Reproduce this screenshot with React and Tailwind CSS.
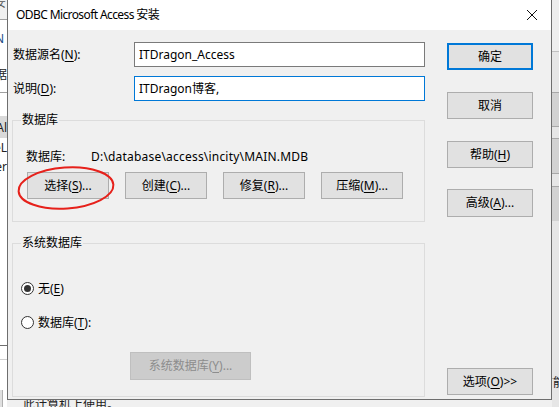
import React from "react";

const FONT = { fontFamily: '"Segoe UI", "Noto Sans", "Noto Sans CJK SC", sans-serif' };

function Btn({ children, className = "", primary = false, disabled = false }) {
  return (
    <div
      className={
        "flex items-center justify-center text-[12px] leading-none " +
        (primary
          ? "border-2 border-[#0078d7] bg-[#e1e1e1] text-black "
          : disabled
          ? "border border-[#bfbfbf] bg-[#cccccc] text-[#8d8d8d] "
          : "border border-[#adadad] bg-[#e1e1e1] text-black ") +
        className
      }
    >
      {children}
    </div>
  );
}

function U({ children }) {
  return <span className="underline underline-offset-2 decoration-1">{children}</span>;
}

function Radio({ checked, children }) {
  return (
    <div className="flex items-center gap-[4px] h-[17px] text-[12px] leading-[17px] text-black">
      <span className="w-[13px] h-[13px] rounded-full border border-[#333333] bg-white flex items-center justify-center">
        {checked && <span className="w-[7px] h-[7px] rounded-full bg-[#333333]" />}
      </span>
      <span>{children}</span>
    </div>
  );
}

function Group({ title, className = "", children }) {
  return (
    <div className={"relative border border-[#dcdcdc] " + className}>
      <span className="absolute left-[8px] top-[-9px] bg-[#f0f0f0] px-[1px] text-[12px] leading-[16px] text-black">
        {title}
      </span>
      {children}
    </div>
  );
}

export default function App() {
  return (
    <div className="relative w-[559px] h-[407px] overflow-hidden bg-[#f0f0f0]" style={FONT}>
      {/* background window fragments (left) */}
      <div className="absolute left-0 top-0 w-[7px] h-[407px] overflow-hidden bg-white">
        <div className="h-[20px] bg-[#f0f0f0] border-b border-[#a0a0a0] relative">
          <span className="absolute right-[1px] top-[-6px] text-[12px] text-[#555]">安</span>
        </div>
        <span className="absolute right-[3px] top-[30px] text-[12px] text-[#1b4b86]">N</span>
        <span className="absolute right-[0px] top-[66px] text-[12px] text-[#222]">据</span>
        <div className="absolute left-0 top-[92px] w-[7px] h-[1px] bg-[#a0a0a0]" />
        <div className="absolute left-0 top-[116px] w-[7px] h-[22px] bg-[#d9d9d9]" />
        <span className="absolute right-[0px] top-[119px] text-[12px] text-[#222]">Al</span>
        <span className="absolute right-[0px] top-[139px] text-[12px] text-[#222]">eL</span>
        <span className="absolute right-[0px] top-[158px] text-[12px] text-[#222]">er</span>
        <div className="absolute left-0 top-[345px] w-[7px] h-[1px] bg-[#6e6e6e]" />
        <div className="absolute left-0 top-[359px] w-[7px] h-[1px] bg-[#d0d0d0]" />
        <div className="absolute left-0 top-[390px] w-[3px] h-[17px] bg-[#e0e0e0] border-r border-[#b0b0b0]" />
      </div>
      {/* background window fragments (right) */}
      <div className="absolute left-[552px] top-0 w-[7px] h-[407px] overflow-hidden bg-[#e6e6e6]">
        <div className="absolute left-0 top-0 w-[7px] h-[52px] bg-[#eeeeee] border-b border-[#c0c0c0]" />
        <div className="absolute left-0 top-[92px] w-[7px] h-[35px] bg-[#d2d2d2] border-y border-[#a8a8a8]" />
        <div className="absolute left-0 top-[138px] w-[7px] h-[36px] bg-[#d2d2d2] border-y border-[#a8a8a8]" />
        <div className="absolute left-0 top-[186px] w-[7px] h-[35px] bg-[#d2d2d2] border-t border-[#a8a8a8]" />
        <div className="absolute left-0 top-[378px] w-[7px] h-[1px] bg-[#b0b0b0]" />
        <span className="absolute left-[1px] top-[374px] text-[12px] text-[#222]">能</span>
      </div>
      {/* bottom strip text */}
      <div className="absolute left-[23px] top-[397px] text-[12px] leading-[16px] text-[#222]">此计算机上使用。</div>

      {/* dialog window */}
      <div className="absolute left-[7px] top-0 w-[545px] h-[400px] border-x border-b border-[#6e6e6e] flex flex-col">
        <div className="h-[30px] bg-white flex items-center justify-between pl-[8px] pr-[10px]">
          <span className="text-[12px] tracking-[-0.6px] text-black">ODBC Microsoft Access 安装</span>
          <svg width="12" height="12" viewBox="0 0 12 12" className="mr-[3px]">
            <path d="M1 1 L11 11 M11 1 L1 11" stroke="#111" strokeWidth="1" />
          </svg>
        </div>
        <div className="flex-1 bg-[#f0f0f0] flex pl-[4px]">
          {/* left column */}
          <div className="w-[414px] flex flex-col pt-[12px]">
            <div className="flex items-center h-[25px]">
              <span className="w-[122px] pl-[1px] text-[12px] text-black">
                数据源名(<U>N</U>):
              </span>
              <div className="w-[291px] h-[25px] bg-white border border-[#7a7a7a] flex items-center pl-[4px] text-[12px] text-black">
                ITDragon_Access
              </div>
            </div>
            <div className="flex items-center h-[25px] mt-[9px]">
              <span className="w-[122px] pl-[1px] text-[12px] text-black">
                说明(<U>D</U>):
              </span>
              <div className="w-[291px] h-[25px] bg-white border border-[#0078d7] flex items-center pl-[4px] text-[12px] text-black">
                ITDragon博客,
              </div>
            </div>

            <Group title="数据库" className="mt-[19px] w-[413px] h-[102px]">
              <div className="flex items-center mt-[27px] pl-[13px] text-[12px] text-black">
                <span className="w-[65px]">数据库:</span>
                <span className="tracking-[0.2px]">D:\database\access\incity\MAIN.MDB</span>
              </div>
              <div className="relative flex gap-[16px] mt-[6px] pl-[14px]">
                <Btn className="w-[82px] h-[27px]">选择(<U>S</U>)...</Btn>
                <Btn className="w-[82px] h-[27px]">创建(<U>C</U>)...</Btn>
                <Btn className="w-[82px] h-[27px]">修复(<U>R</U>)...</Btn>
                <Btn className="w-[82px] h-[27px]">压缩(<U>M</U>)...</Btn>
                <svg
                  className="absolute left-[-4px] top-[-17px] pointer-events-none"
                  width="110"
                  height="60"
                  viewBox="0 0 110 60"
                >
                  <ellipse
                    cx="57"
                    cy="33"
                    rx="47.5"
                    ry="20.5"
                    transform="rotate(-4 57 33)"
                    fill="none"
                    stroke="#e6211b"
                    strokeWidth="2"
                  />
                </svg>
              </div>
            </Group>

            <Group title="系统数据库" className="mt-[21px] w-[413px] h-[154px]">
              <div className="flex flex-col pl-[8px] pt-[36px] gap-[17px]">
                <Radio checked>
                  无(<U>E</U>)
                </Radio>
                <Radio>
                  数据库(<U>T</U>):
                </Radio>
              </div>
              <div className="pl-[117px] mt-[21px]">
                <Btn disabled className="w-[121px] h-[28px]">
                  系统数据库(<U>Y</U>)...
                </Btn>
              </div>
            </Group>
          </div>

          {/* right column */}
          <div className="ml-[21px] flex flex-col pt-[13px] w-[86px]">
            <Btn primary className="w-[86px] h-[27px]">确定</Btn>
            <Btn className="w-[86px] h-[27px] mt-[22px]">取消</Btn>
            <Btn className="w-[86px] h-[27px] mt-[22px]">
              帮助(<U>H</U>)
            </Btn>
            <Btn className="w-[86px] h-[28px] mt-[21px]">
              高级(<U>A</U>)...
            </Btn>
            <Btn className="w-[86px] h-[27px] mt-[151px]">
              选项(<U>O</U>)&gt;&gt;
            </Btn>
          </div>
        </div>
      </div>
    </div>
  );
}
